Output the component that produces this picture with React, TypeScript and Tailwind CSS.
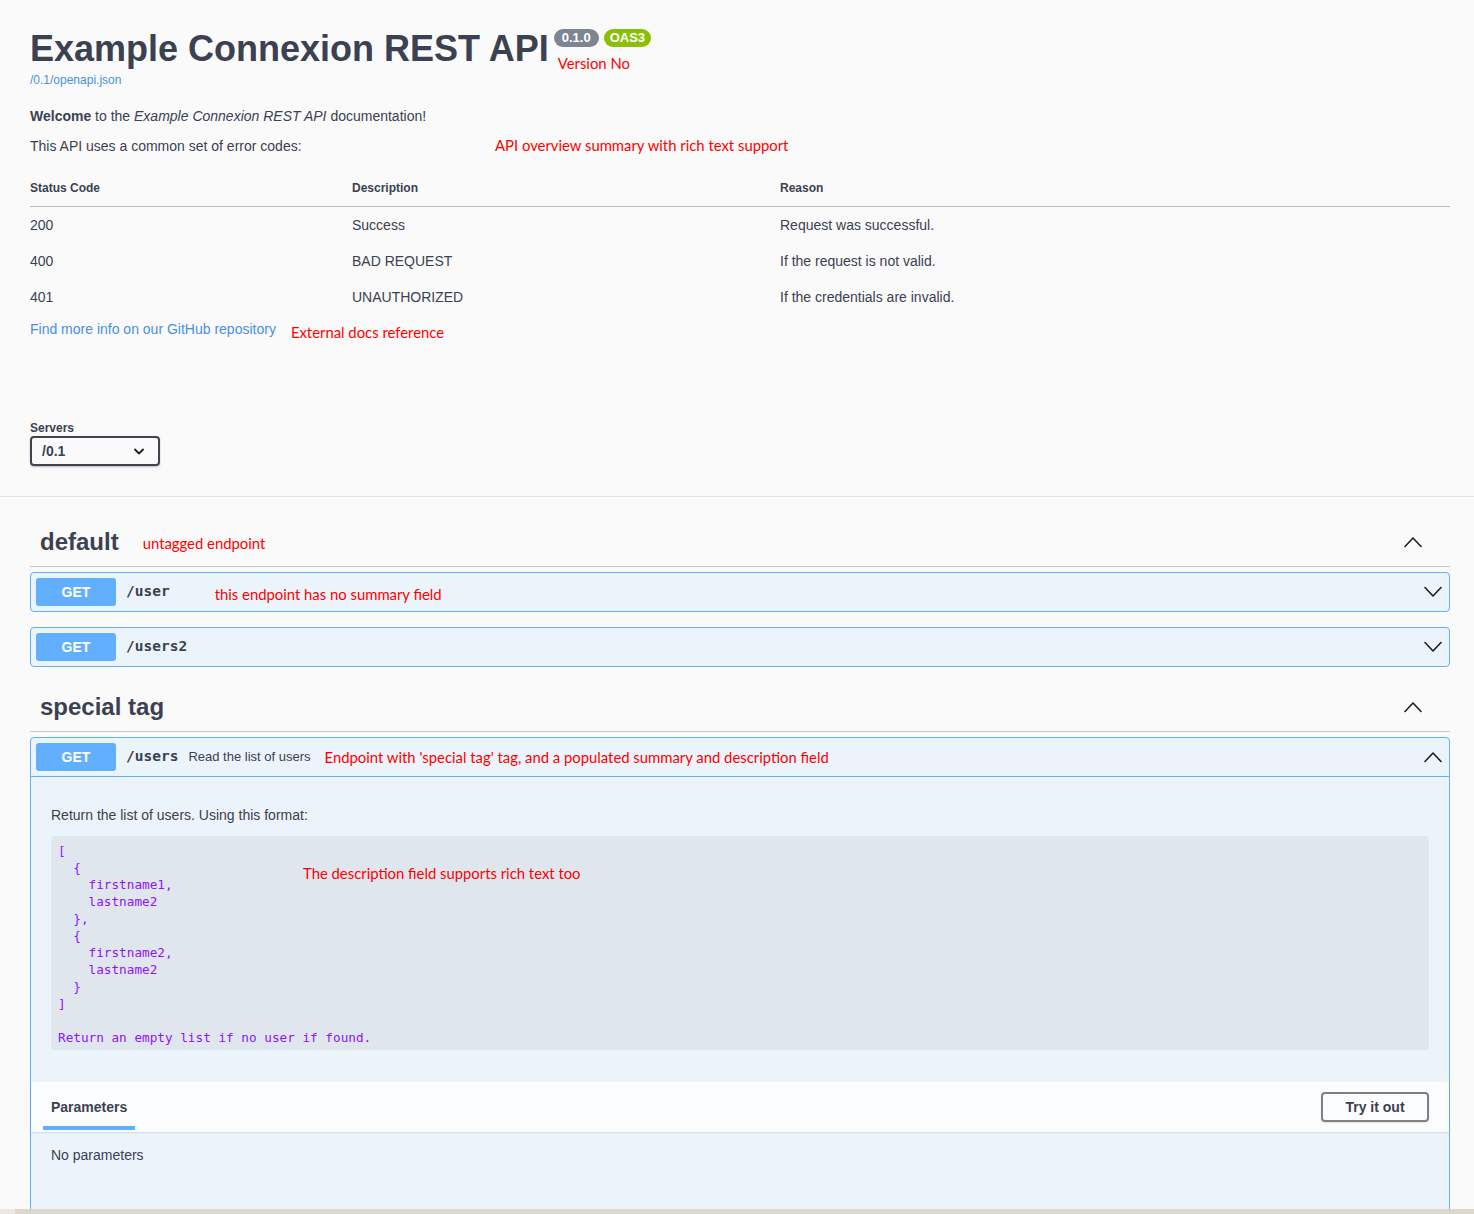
import { ReactNode } from "react";

// ─── Shared bits ──────────────────────────────────────────────

const sans = "font-['Liberation_Sans',Arial,sans-serif]";
const mono = "font-['DejaVu_Sans_Mono',monospace]";
const note = "font-['Lato',sans-serif] text-[14.85px] text-[#ff0000]";

function Note({ children, className = "" }: { children: ReactNode; className?: string }) {
  return <span className={`${note} leading-[18px] whitespace-nowrap ${className}`}>{children}</span>;
}

function Chevron({ up = false }: { up?: boolean }) {
  return (
    <svg width="18" height="12" viewBox="0 0 18 12" fill="none" className="shrink-0">
      <path
        d={up ? "M1 10.5 L9 2 L17 10.5" : "M1 1.5 L9 10 L17 1.5"}
        stroke="#1f1f1f"
        strokeWidth="1.6"
        strokeLinecap="round"
        strokeLinejoin="round"
      />
    </svg>
  );
}

// ─── Tag header ───────────────────────────────────────────────

function TagHeader({ title, annotation }: { title: string; annotation?: string }) {
  return (
    <div className="flex items-center h-[50px] pl-[10px] pr-[28px] border-b border-[#c6c8cd] mb-[5px]">
      <h3 className={`${sans} text-[24px] font-bold text-[#3b4151] leading-[30px]`}>{title}</h3>
      {annotation && <Note className="ml-[24px] mt-[2px]">{annotation}</Note>}
      <div className="flex-1" />
      <Chevron up />
    </div>
  );
}

// ─── Operation summary row ────────────────────────────────────

function OpSummary({
  path,
  summary,
  annotation,
  annotationGap,
  open = false,
}: {
  path: string;
  summary?: string;
  annotation?: string;
  annotationGap?: string;
  open?: boolean;
}) {
  return (
    <div className={`flex items-center p-[5px] pr-[7px] ${open ? "border-b border-[#61affe]" : ""}`}>
      <span
        className={`${sans} w-[80px] h-[28px] rounded-[3px] bg-[#61affe] text-white text-[14px] font-bold flex items-center justify-center`}
      >
        GET
      </span>
      <span className={`${mono} ml-[10px] text-[14.5px] font-bold text-[#3b4151]`}>{path}</span>
      {summary && <span className={`${sans} ml-[10px] text-[13px] text-[#3b4151]`}>{summary}</span>}
      {annotation && <Note className={annotationGap}>{annotation}</Note>}
      <div className="flex-1" />
      <Chevron up={open} />
    </div>
  );
}

// ─── Page ─────────────────────────────────────────────────────

const statusRows = [
  ["200", "Success", "Request was successful."],
  ["400", "BAD REQUEST", "If the request is not valid."],
  ["401", "UNAUTHORIZED", "If the credentials are invalid."],
];

const codeLines = [
  "[",
  "  {",
  "    firstname1,",
  "    lastname2",
  "  },",
  "  {",
  "    firstname2,",
  "    lastname2",
  "  }",
  "]",
  " ",
  "Return an empty list if no user if found.",
];

export default function App() {
  return (
    <div className={`${sans} h-[1214px] overflow-hidden flex flex-col bg-[#fafafa] text-[#3b4151]`}>
      <div className="flex-1 min-h-0 overflow-hidden">
        {/* Info */}
        <div className="pl-[30px] pr-[24px]">
          <div className="flex items-start pt-[27px]">
            <h2 className="text-[36px] font-bold leading-[43px] text-[#3b4151] whitespace-nowrap">
              Example Connexion REST API
            </h2>
            <div className="ml-[5px] mt-[2px] flex flex-col">
              <div className="flex gap-[5px]">
                <span className="h-[18px] px-[8px] rounded-[57px] bg-[#7d8492] text-white text-[13px] font-bold leading-[18px]">
                  0.1.0
                </span>
                <span className="h-[18px] px-[6px] rounded-[57px] bg-[#89bf04] text-white text-[13px] font-bold leading-[18px]">
                  OAS3
                </span>
              </div>
              <Note className="ml-[4px] mt-[7px]">Version No</Note>
            </div>
          </div>
          <a className="block mt-0 text-[12px] leading-[16px] text-[#4990e2]">/0.1/openapi.json</a>

          <p className="mt-[18px] text-[14px] leading-[20px]">
            <b>Welcome</b> to the <i>Example Connexion REST API</i> documentation!
          </p>
          <div className="mt-[10px] flex items-center">
            <p className="w-[465px] text-[14px] leading-[20px]">This API uses a common set of error codes:</p>
            <Note className="-mt-[3px]">API overview summary with rich text support</Note>
          </div>

          <div className="mt-[14px] text-[14px]">
            <div className="grid grid-cols-[322px_428px_1fr] h-[37px] items-center border-b border-[#b9bcc2] text-[12px] font-bold">
              <span>Status Code</span>
              <span>Description</span>
              <span>Reason</span>
            </div>
            {statusRows.map((r) => (
              <div key={r[0]} className="grid grid-cols-[322px_428px_1fr] h-[36px] items-center">
                <span>{r[0]}</span>
                <span>{r[1]}</span>
                <span>{r[2]}</span>
              </div>
            ))}
          </div>

          <div className="mt-[2px] flex items-center">
            <a className="text-[14px] leading-[20px] text-[#4990e2]">Find more info on our GitHub repository</a>
            <Note className="ml-[15px] mt-[6px]">External docs reference</Note>
          </div>

          {/* Servers */}
          <div className="mt-[79px] pb-[30px]">
            <label className="block text-[12px] font-bold leading-[16px]">Servers</label>
            <div className="w-[130px] h-[30px] border-2 border-[#41444e] rounded-[4px] shadow-[0_1px_2px_rgba(0,0,0,0.25)] flex items-center pl-[10px] pr-[14px]">
              <span className="text-[14px] font-bold flex-1">/0.1</span>
              <svg width="10" height="7" viewBox="0 0 10 7" fill="none">
                <path d="M1 1.5 L5 5.5 L9 1.5" stroke="#1f1f1f" strokeWidth="1.8" strokeLinecap="round" strokeLinejoin="round" />
              </svg>
            </div>
          </div>
        </div>
        <div className="border-b border-[#eddfe2]" />

        {/* Operations */}
        <div className="pl-[30px] pr-[24px] pt-[20px]">
          <TagHeader title="default" annotation="untagged endpoint" />
          <div className="border border-[#61affe] rounded-[4px] bg-[#ebf3fb] mb-[15px]">
            <OpSummary path="/user" annotation="this endpoint has no summary field" annotationGap="ml-[45px] mt-[4px]" />
          </div>
          <div className="border border-[#61affe] rounded-[4px] bg-[#ebf3fb] mb-[15px]">
            <OpSummary path="/users2" />
          </div>

          <TagHeader title="special tag" />
          <div className="border border-[#61affe] rounded-[4px] bg-[#ebf3fb]">
            <OpSummary
              path="/users"
              summary="Read the list of users"
              annotation="Endpoint with 'special tag' tag, and a populated summary and description field"
              annotationGap="ml-[14px]"
              open
            />
            <div className="px-[20px] pt-[28px] pb-[32px]">
              <p className="text-[14px] leading-[20px]">Return the list of users. Using this format:</p>
              <div className="relative mt-[11px] rounded-[4px] bg-[#dfe6ee] pl-[7px] pt-[6px] pb-[4px]">
                {codeLines.map((line, i) => (
                  <div
                    key={i}
                    className={`${mono} w-fit whitespace-pre text-[12.7px] leading-[17px] text-[#9012fe]`}
                  >
                    {line}
                  </div>
                ))}
                <Note className="absolute left-[252px] top-[28px]">
                  The description field supports rich text too
                </Note>
              </div>
            </div>

            <div className="flex items-center h-[50px] bg-[#fbfcfd] shadow-[0_1px_2px_rgba(0,0,0,0.1)] pl-[12px] pr-[20px]">
              <div className="relative h-full flex items-center px-[8px]">
                <span className="text-[14px] font-bold">Parameters</span>
                <span className="absolute left-0 right-0 bottom-[2px] h-[4px] bg-[#61affe]" />
              </div>
              <div className="flex-1" />
              <button className="w-[108px] h-[30px] border-2 border-[#808080] rounded-[4px] text-[14px] font-bold text-[#3b4151] shadow-[0_1px_2px_rgba(0,0,0,0.1)]">
                Try it out
              </button>
            </div>
            <div className="px-[20px] pt-[13px] pb-[60px]">
              <p className="text-[14px] leading-[20px]">No parameters</p>
            </div>
          </div>
        </div>
      </div>
      <div className="h-[5px] flex shrink-0">
        <div className="w-[15px] bg-[#ebe8e1]" />
        <div className="flex-1 bg-[#ddd8cc]" />
      </div>
    </div>
  );
}
